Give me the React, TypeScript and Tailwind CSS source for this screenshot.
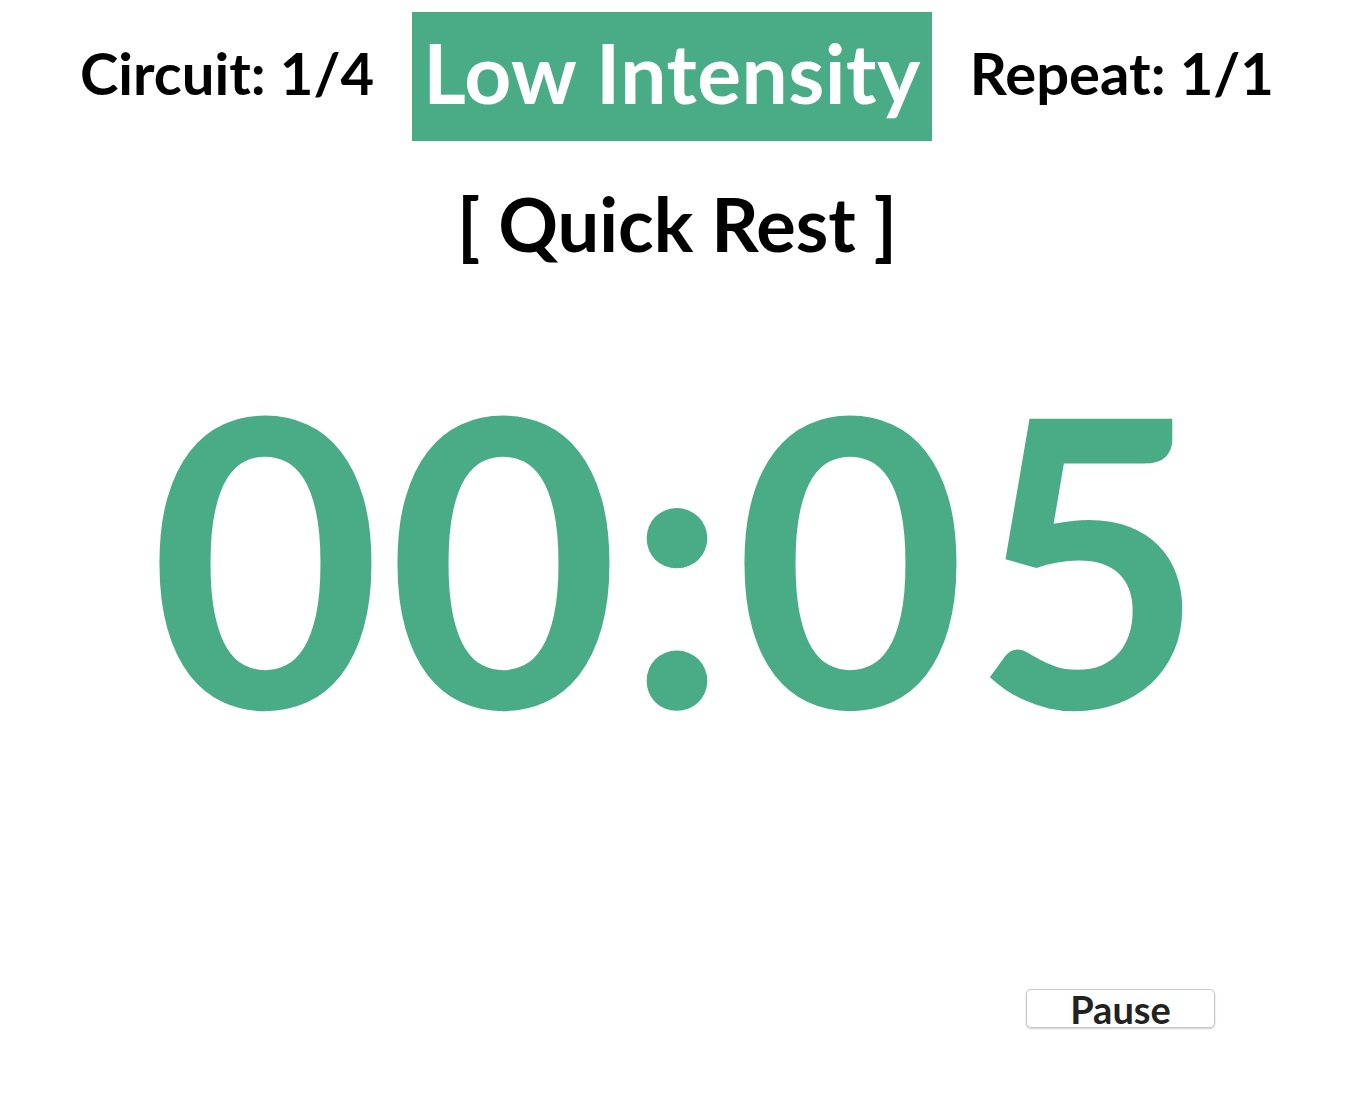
export default function App() {
  return (
    <div className="w-[1354px] h-[1095px] bg-white flex flex-col items-center font-['Lato',sans-serif] text-black">
      {/* header row */}
      <div className="flex items-center justify-center gap-[38px] mt-[12px] h-[129px]">
        <span className="text-[58px] font-bold leading-none -mt-[8px]">Circuit: 1/4</span>
        <div className="h-[129px] bg-[#4aab87] px-[11px] flex items-center">
          <span className="text-[82px] font-bold leading-none text-white tracking-[0.5px] -mt-[10px]">Low Intensity</span>
        </div>
        <span className="text-[58px] font-bold leading-none -mt-[8px]">Repeat: 1/1</span>
      </div>

      {/* stage */}
      <div className="mt-[46px] text-[74px] font-bold leading-none">[ Quick Rest ]</div>

      {/* timer */}
      <div className="mt-[92px] text-[400px] font-bold leading-none text-[#4aab87] tracking-[6px] pl-[6px]">00:05</div>

      {/* controls */}
      <div className="w-full flex justify-end pr-[139px] mt-auto mb-[67px]">
        <button className="w-[189px] h-[39px] rounded-[5px] border border-[#c8c8c8] bg-white shadow-[0_1px_2px_rgba(0,0,0,0.2)] text-[38px] font-bold leading-none text-[#222] flex items-center justify-center">
          Pause
        </button>
      </div>
    </div>
  );
}
